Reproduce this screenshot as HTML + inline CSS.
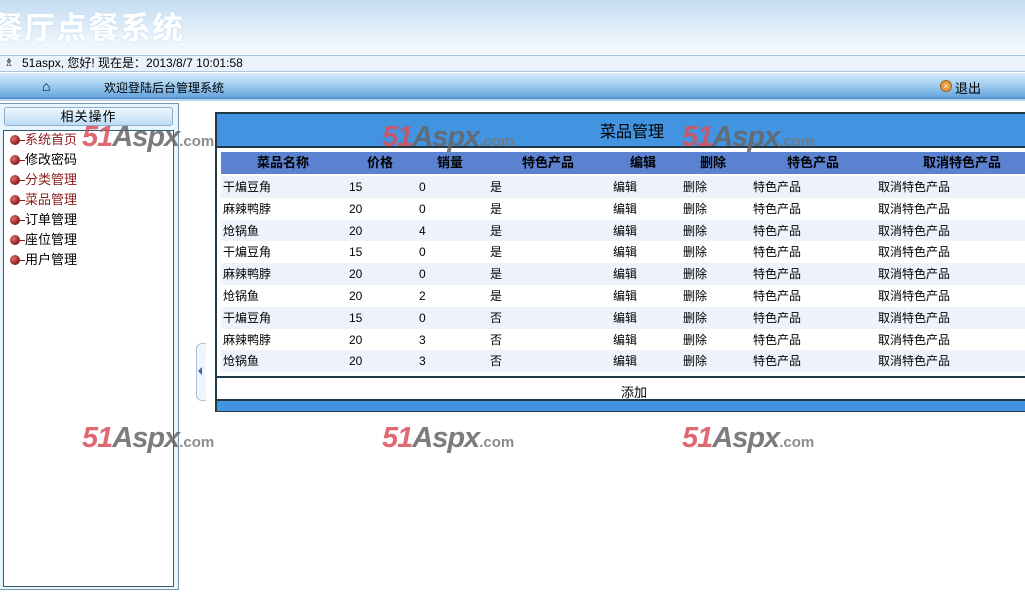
<!DOCTYPE html>
<html><head><meta charset="utf-8"><style>
*{margin:0;padding:0;box-sizing:border-box}
body{width:1025px;height:615px;position:relative;overflow:hidden;background:#fff;font-family:"Liberation Sans","Noto Sans CJK SC",sans-serif;font-size:12px;color:#000}
.a{position:absolute;white-space:nowrap}
.wm{position:absolute;font-weight:bold;font-style:italic;font-size:29px;letter-spacing:-1px;white-space:nowrap;opacity:.85;line-height:30px}
.wm b{color:#d9505a}.wm i{color:#666}.wm s{text-decoration:none;font-size:15px;color:#777;font-style:normal;font-weight:bold;letter-spacing:0}
.row{position:absolute;left:221px;width:804px;height:22px;line-height:22px;white-space:nowrap}
.row span{position:absolute;top:0}
.hd span{position:absolute;top:0;font-weight:bold;transform:translateX(-50%);font-size:13px}
.menu div{height:20px;line-height:20px;padding-left:20px;position:relative;font-size:13px}
.menu div:before{content:"";position:absolute;left:5px;top:5px;width:10px;height:10px;border-radius:50%;background:radial-gradient(circle at 35% 35%,#e07070,#8b1a1a 70%)}
.menu div:after{content:"";position:absolute;left:15px;top:10px;width:5px;border-top:1px dashed #8b1a1a}
</style></head><body>
<div class="a" style="left:0;top:0;width:1025px;height:56px;background:linear-gradient(#c4dcf2,#eaf3fb 70%,#f4f9fd)"></div>
<div class="a" style="left:-8px;top:3px;font-size:31px;font-weight:bold;color:#fff;letter-spacing:1px;font-family:'Noto Sans CJK SC',sans-serif;text-shadow:0 0 2px #c8dcf0">餐厅点餐系统</div>
<div class="a" style="left:0;top:55px;width:1025px;height:17px;background:#eaf3fb;border-top:1px solid #aac4dc;border-bottom:1px solid #aac4dc"></div>
<div class="a" style="left:4px;top:56px;font-size:11px">&#9815;</div>
<div class="a" style="left:22px;top:56px;font-size:12px;line-height:15px">51aspx, 您好! 现在是：2013/8/7 10:01:58</div>
<div class="a" style="left:0;top:73px;width:1025px;height:28px;background:linear-gradient(#d8ecfb,#9ccbf0 50%,#6aa8de 90%,#4a88c8);border-bottom:2px solid #b8d4ec"></div>
<div class="a" style="left:42px;top:78px;font-size:14px">&#8962;</div>
<div class="a" style="left:104px;top:79px;font-size:12px">欢迎登陆后台管理系统</div>
<div class="a" style="left:940px;top:80px;width:12px;height:12px;border-radius:50%;background:#e89a40;border:1px solid #a06020;color:#fff;font-size:9px;line-height:10px;text-align:center">×</div>
<div class="a" style="left:955px;top:78px;font-size:13px">退出</div>
<div class="a" style="left:0;top:103px;width:179px;height:487px;background:#e6f4fd;border:1px solid #7a95aa;border-left:none"></div>
<div class="a" style="left:4px;top:107px;width:169px;height:19px;border:1px solid #8cb0cc;border-radius:3px;background:linear-gradient(#f0f8fe,#bcdcf4);text-align:center;font-size:13px;line-height:18px;letter-spacing:1px">相关操作</div>
<div class="a" style="left:3px;top:130px;width:171px;height:457px;background:#fff;border:1px solid #345a74"></div>
<div class="a menu" style="left:5px;top:130px">
<div style="color:#8b1a1a">系统首页</div><div>修改密码</div><div style="color:#8b1a1a">分类管理</div><div style="color:#8b1a1a">菜品管理</div><div>订单管理</div><div>座位管理</div><div>用户管理</div></div>
<div class="a" style="left:196px;top:343px;width:10px;height:58px;border:1px solid #a8c4dc;border-right:none;border-radius:6px 0 0 6px;background:#f0f6fc"></div>
<div class="a" style="left:198px;top:367px;width:0;height:0;border:4px solid transparent;border-right:4px solid #3a6a9a;border-left:none"></div>
<div class="a" style="left:215px;top:112px;width:810px;height:300px;border:2px solid #203848;border-right:none;background:#fff"></div>
<div class="a" style="left:217px;top:114px;width:808px;height:34px;background:#4293e0;border-bottom:2px solid #203848"></div>
<div class="a" style="left:600px;top:118px;font-size:16px">菜品管理</div>
<div class="row hd" style="top:152px;background:#5a82d0"><span style="left:62px">菜品名称</span><span style="left:159px">价格</span><span style="left:229px">销量</span><span style="left:327px">特色产品</span><span style="left:422px">编辑</span><span style="left:492px">删除</span><span style="left:592px">特色产品</span><span style="left:741px">取消特色产品</span></div>
<div id="rows"></div>
<div class="a" style="left:217px;top:376px;width:808px;height:2px;background:#203848"></div>
<div class="a" style="left:621px;top:382px;font-size:13px">添加</div>
<div class="a" style="left:217px;top:399px;width:808px;height:2px;background:#203848"></div>
<div class="a" style="left:217px;top:401px;width:808px;height:10px;background:#4293e0"></div>
<div class="wm" style="left:82px;top:122px"><b>51</b><i>Aspx</i><s>.com</s></div>
<div class="wm" style="left:382px;top:122px"><b>51</b><i>Aspx</i><s>.com</s></div>
<div class="wm" style="left:682px;top:122px"><b>51</b><i>Aspx</i><s>.com</s></div>
<div class="wm" style="left:82px;top:423px"><b>51</b><i>Aspx</i><s>.com</s></div>
<div class="wm" style="left:382px;top:423px"><b>51</b><i>Aspx</i><s>.com</s></div>
<div class="wm" style="left:682px;top:423px"><b>51</b><i>Aspx</i><s>.com</s></div>
<script>
var d=[["干煸豆角",15,0,"是"],["麻辣鸭脖",20,0,"是"],["炝锅鱼",20,4,"是"],["干煸豆角",15,0,"是"],["麻辣鸭脖",20,0,"是"],["炝锅鱼",20,2,"是"],["干煸豆角",15,0,"否"],["麻辣鸭脖",20,3,"否"],["炝锅鱼",20,3,"否"]];
var h="";d.forEach(function(r,i){h+='<div class="row" style="top:'+(176+i*21.8)+'px;background:'+(i%2?'#fff':'#eef3fb')+'"><span style="left:2px">'+r[0]+'</span><span style="left:128px">'+r[1]+'</span><span style="left:198px">'+r[2]+'</span><span style="left:269px">'+r[3]+'</span><span style="left:392px">编辑</span><span style="left:462px">删除</span><span style="left:532px">特色产品</span><span style="left:657px">取消特色产品</span></div>'});
document.getElementById("rows").outerHTML=h;
</script>
</body></html>
